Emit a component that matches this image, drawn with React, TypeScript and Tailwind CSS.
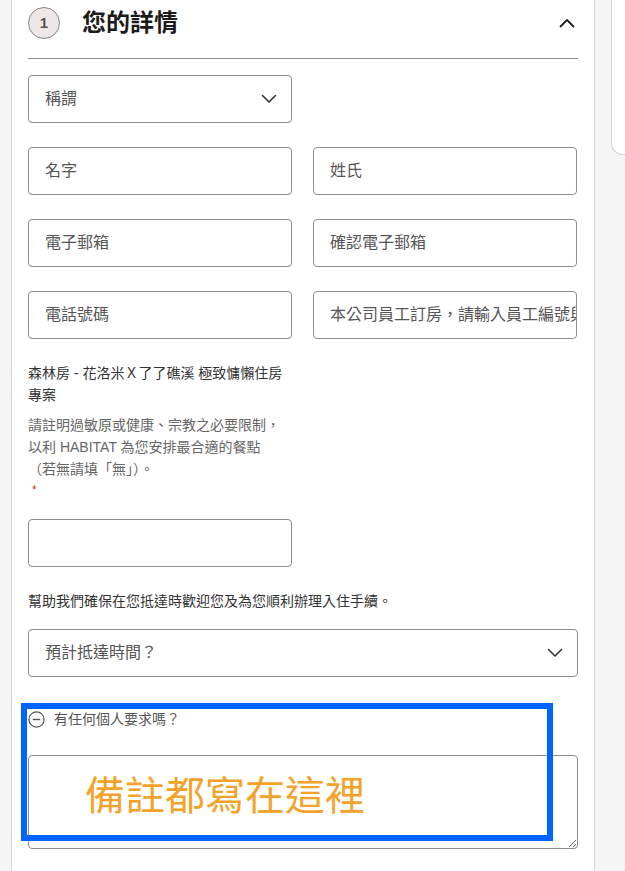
import React from "react";

const font = { fontFamily: '"Liberation Sans", "Noto Sans CJK TC", sans-serif' };

function ChevronDown() {
  return (
    <svg width="16" height="10" viewBox="0 0 16 10" fill="none">
      <path d="M1.5 1.5 L8 8 L14.5 1.5" stroke="#333" strokeWidth="1.6" strokeLinecap="round" strokeLinejoin="round" />
    </svg>
  );
}

function Field({ label }: { label: string }) {
  return (
    <div className="h-[48px] border border-[#8e8e93] rounded-[4px] flex items-center px-4 overflow-hidden whitespace-nowrap text-[16px] text-[#555]">
      {label}
    </div>
  );
}

function Select({ label, wide }: { label: string; wide?: boolean }) {
  return (
    <div
      className={
        (wide ? "w-full " : "w-[264px] ") +
        "h-[48px] border border-[#8e8e93] rounded-[4px] flex items-center justify-between pl-4 pr-[14px] text-[16px] text-[#555]"
      }
    >
      <span>{label}</span>
      <ChevronDown />
    </div>
  );
}

export default function App() {
  return (
    <div className="relative min-h-screen bg-[#f5f5f5] flex items-start overflow-hidden" style={font}>
      <div className="ml-[11px] w-[584px] shrink-0 bg-white border-x border-[#cdd4df] px-4 pb-[40px]">
        {/* header */}
        <div className="mt-[7px] h-[32px] flex items-center">
          <div className="w-[32px] h-[32px] rounded-full bg-[#ede7e7] border border-[#8a8383] flex items-center justify-center text-[15px] font-bold text-[#5a5050]">
            1
          </div>
          <div className="ml-[22px] text-[24px] font-bold text-[#1b1b1b] leading-none">您的詳情</div>
          <div className="ml-auto mr-[3px]">
            <svg width="16" height="10" viewBox="0 0 16 10" fill="none">
              <path d="M1.5 8.5 L8 2 L14.5 8.5" stroke="#222" strokeWidth="1.8" strokeLinecap="round" strokeLinejoin="round" />
            </svg>
          </div>
        </div>
        <div className="mt-[19px] h-px bg-[#8e8e93]" />

        <div className="mt-[16px]">
          <Select label="稱謂" />
        </div>

        <div className="mt-[24px] grid grid-cols-[264px_264px] gap-x-[21px] gap-y-[24px]">
          <Field label="名字" />
          <Field label="姓氏" />
          <Field label="電子郵箱" />
          <Field label="確認電子郵箱" />
          <Field label="電話號碼" />
          <Field label="本公司員工訂房，請輸入員工編號與姓名" />
        </div>

        <div className="mt-[23px] w-[264px] text-[14px] leading-[22px] text-[#333]">
          森林房 - 花洛米Ｘ了了礁溪 極致慵懶住房專案
        </div>
        <div className="mt-[8px] w-[264px] text-[14px] leading-[22px] text-[#666]">
          請註明過敏原或健康、宗教之必要限制，
          <br />
          以利 HABITAT 為您安排最合適的餐點
          <br />
          （若無請填「無」）。
        </div>
        <div className="pl-[4px] h-[20px] text-[12px] leading-[20px] text-[#d0312d]">*</div>

        <div className="mt-[19px] w-[264px] h-[48px] border border-[#8e8e93] rounded-[4px]" />

        <div className="mt-[23px] text-[14px] leading-[22px] text-[#333]">
          幫助我們確保在您抵達時歡迎您及為您順利辦理入住手續。
        </div>

        <div className="mt-[17px]">
          <Select label="預計抵達時間？" wide />
        </div>

        <div className="mt-[34px] h-[16px] flex items-center">
          <svg width="17" height="17" viewBox="0 0 17 17" fill="none">
            <circle cx="8.5" cy="8.5" r="7.6" stroke="#555" strokeWidth="1.2" />
            <path d="M4.8 8.5 H12.2" stroke="#555" strokeWidth="1.4" />
          </svg>
          <span className="ml-[9px] text-[14px] text-[#555]">有任何個人要求嗎？</span>
        </div>

        <textarea
          className="mt-[28px] block w-full h-[94px] border border-[#8e8e93] rounded-[4px] resize-y outline-none"
          defaultValue=""
        />
      </div>

      <div className="ml-[16px] flex-1 h-[155px] bg-white border-l border-b border-[#cdd4df] rounded-bl-[12px]" />

      {/* annotation overlays */}
      <div className="absolute left-[21px] top-[703px] w-[532px] h-[138px] border-[6px] border-[#0064ff] pointer-events-none" />
      <div
        className="absolute left-[85px] top-[773px] text-[40px] leading-[40px] text-[#f5a22a] pointer-events-none"
        style={{ fontFamily: '"Noto Sans CJK TC", sans-serif', fontWeight: 400 }}
      >
        備註都寫在這裡
      </div>
    </div>
  );
}
